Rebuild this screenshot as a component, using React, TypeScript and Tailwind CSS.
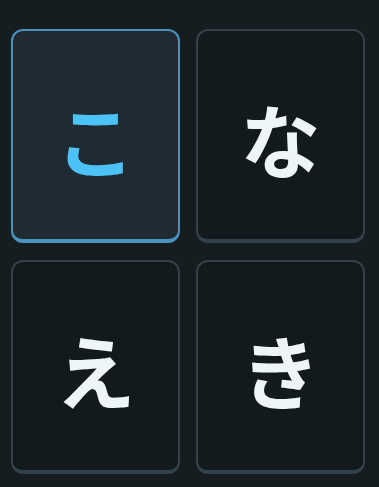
import React from "react"

const kana = [
  { ch: "こ", active: true },
  { ch: "な", active: false },
  { ch: "え", active: false },
  { ch: "き", active: false },
]

export default function App() {
  return (
    <div className="min-h-[487px] w-[379px] bg-[#151d21] pl-[11px] pt-[29px]">
      <div className="grid grid-cols-[169px_169px] gap-x-4 gap-y-[17px]">
        {kana.map((k) => (
          <button
            key={k.ch}
            className={
              k.active
                ? "flex h-[214px] items-center justify-center rounded-xl border-2 border-b-4 border-[#4b93bd] bg-[#1f2a32] text-[#4cc2f6]"
                : "flex h-[214px] items-center justify-center rounded-xl border-2 border-b-4 border-[#33414a] bg-[#121a1e] text-[#eef5f9]"
            }
          >
            <span className="pt-1 font-['Noto_Sans_CJK_JP',sans-serif] text-[80px] font-bold leading-none">
              {k.ch}
            </span>
          </button>
        ))}
      </div>
    </div>
  )
}
